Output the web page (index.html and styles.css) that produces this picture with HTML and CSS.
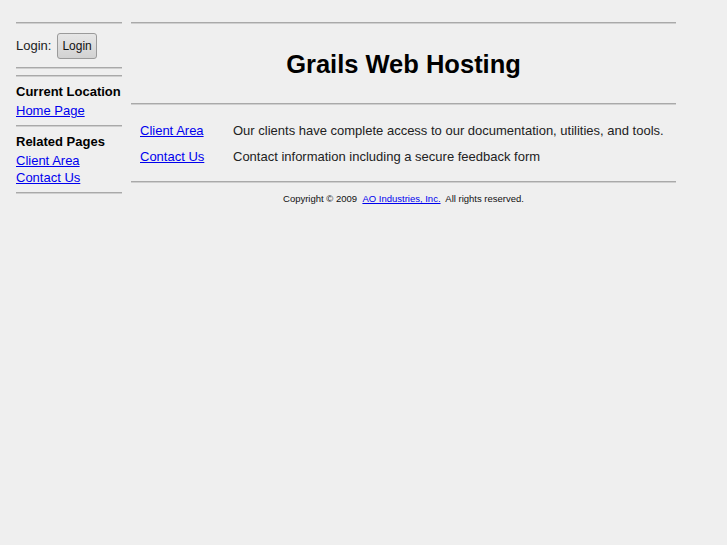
FILE: index.html
```html
<!DOCTYPE html>
<html>
<head>
<meta charset="utf-8">
<title>Grails Web Hosting</title>
<link rel="stylesheet" href="styles.css">
</head>
<body>
<div class="page">
  <aside class="side">
    <div class="rule"></div>
    <div class="login">
      <span>Login:</span>
      <button class="btn" type="button">Login</button>
    </div>
    <div class="rule"></div>
    <div class="rule r2"></div>
    <div class="group">
      <div class="ghead">Current Location</div>
      <a href="#">Home Page</a>
    </div>
    <div class="rule"></div>
    <div class="group">
      <div class="ghead">Related Pages</div>
      <a href="#">Client Area</a>
      <a href="#">Contact Us</a>
    </div>
    <div class="rule"></div>
  </aside>
  <main class="main">
    <div class="rule"></div>
    <h1 class="title">Grails Web Hosting</h1>
    <div class="rule"></div>
    <div class="links">
      <a href="#">Client Area</a>
      <span>Our clients have complete access to our documentation, utilities, and tools.</span>
      <a href="#">Contact Us</a>
      <span>Contact information including a secure feedback form</span>
    </div>
    <div class="rule"></div>
    <div class="copy">Copyright &copy;&nbsp;2009 &nbsp;<a href="#">AO Industries, Inc.</a>&nbsp; All rights reserved.</div>
  </main>
</div>
</body>
</html>
```
FILE: styles.css
```css
html, body {
  margin: 0;
  padding: 0;
  background: #efefef;
}
body {
  font-family: "Liberation Sans", Arial, sans-serif;
  font-size: 13px;
  color: #222;
}
a {
  color: #0000ee;
}
.page {
  display: flex;
  align-items: flex-start;
  padding: 22px 0 0 16px;
  gap: 9px;
}
.rule {
  height: 0;
  border-top: 1px solid #a9a9a9;
  border-bottom: 1px solid #cfcfcf;
}
.side {
  width: 106px;
  display: flex;
  flex-direction: column;
}
.login {
  display: flex;
  align-items: center;
  gap: 6px;
  height: 43px;
  color: #222;
}
.btn {
  font-family: "Liberation Sans", Arial, sans-serif;
  font-size: 12px;
  color: #111;
  height: 26px;
  padding: 0 4px;
  border: 1px solid #9a9a9a;
  border-radius: 3px;
  background: linear-gradient(#e6e6e6, #d2d2d2);
  margin-top: 1px;
}
.r2 {
  margin-top: 6px;
}
.group {
  display: flex;
  flex-direction: column;
  padding: 6px 0 6px;
  line-height: 17px;
}
.group a {
  align-self: flex-start;
}
.ghead {
  font-weight: bold;
  color: #000;
  margin-bottom: 2px;
}
.main {
  width: 545px;
  display: flex;
  flex-direction: column;
}
.title {
  margin: 0;
  height: 78px;
  padding-top: 1px;
  line-height: 78px;
  text-align: center;
  font-size: 25.5px;
  font-weight: bold;
  color: #000;
}
.links {
  display: grid;
  grid-template-columns: 93px auto;
  row-gap: 9px;
  padding: 17px 0 16px 9px;
  line-height: 17px;
}
.links a {
  justify-self: start;
}
.copy {
  text-align: center;
  font-size: 9.5px;
  color: #111;
  padding-top: 10px;
}
```
